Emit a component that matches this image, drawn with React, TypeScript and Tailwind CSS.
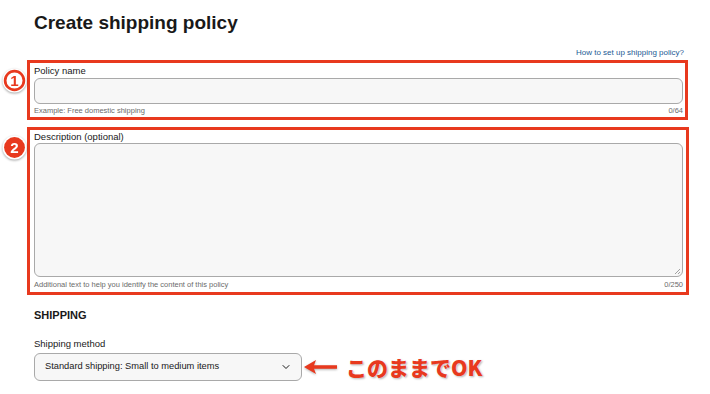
import { ChevronDown } from 'lucide-react'

const RED = '#e8391e'

function Badge({ n, filled }: { n: string; filled?: boolean }) {
  return (
    <svg width="25" height="25" viewBox="0 0 24 24" className="absolute -left-[28px] top-[5px] drop-shadow-[0_1px_1px_rgba(0,0,0,0.35)]">
      <circle cx="12" cy="12" r="11.5" fill="#fff" />
      {filled ? (
        <circle cx="12" cy="12" r="10" fill={RED} />
      ) : (
        <circle cx="12" cy="12" r="9" fill="#fff" stroke={RED} strokeWidth="2.6" />
      )}
      <text
        x="12"
        y="17.2"
        textAnchor="middle"
        fontSize="14.5"
        fontWeight="700"
        fontFamily="Arial, 'Liberation Sans', sans-serif"
        fill={filled ? '#fff' : RED}
      >
        {n}
      </text>
    </svg>
  )
}

export default function App() {
  return (
    <div className="w-[710px] h-[394px] overflow-hidden bg-white font-['Liberation_Sans',Arial,sans-serif] text-[#191919]">
      <div className="pl-[34px] pr-[22px] pt-[10px]">
        <h1 className="text-[19px] leading-[26px] font-bold">Create shipping policy</h1>

        <div className="flex justify-end pr-[4px] mt-[12px]">
          <a className="text-[8px] leading-[10px] text-[#1d5a94]">How to set up shipping policy?</a>
        </div>

        {/* policy name */}
        <div className="relative -ml-[7px] mt-[2px] border-[3px] border-[#e8391e] pl-[4px] pr-[2px] pt-[2px] pb-[1px]">
          <Badge n="1" />
          <div className="text-[9.5px] leading-[12px]">Policy name</div>
          <div className="mt-[1px] h-[26px] rounded-[6px] border border-[#a9a9a9] bg-[#f7f7f7]" />
          <div className="flex justify-between text-[7.5px] leading-[10px] text-[#6b6b6b] mt-[2px]">
            <span>Example: Free domestic shipping</span>
            <span>0/64</span>
          </div>
        </div>

        {/* description */}
        <div className="relative -ml-[7px] mr-[-1px] mt-[7px] border-[3px] border-[#e8391e] pl-[4px] pr-[3px] pt-[1px] pb-[2px]">
          <Badge n="2" filled />
          <div className="text-[9.5px] leading-[12px]">Description (optional)</div>
          <div className="relative h-[134px] rounded-[6px] border border-[#a9a9a9] bg-[#f7f7f7]">
            <svg width="7" height="7" viewBox="0 0 7 7" className="absolute right-[1px] bottom-[1px]">
              <path d="M6 1 L1 6 M6 4 L4 6" stroke="#8a8a8a" strokeWidth="0.8" />
            </svg>
          </div>
          <div className="flex justify-between text-[7.5px] leading-[10px] text-[#6b6b6b] mt-[3px]">
            <span>Additional text to help you identify the content of this policy</span>
            <span>0/250</span>
          </div>
        </div>

        <h2 className="mt-[13px] text-[11px] leading-[14px] font-bold">SHIPPING</h2>
        <div className="mt-[16px] text-[9.5px] leading-[12px]">Shipping method</div>

        <div className="mt-[3px] flex items-center">
          <div className="flex h-[28px] w-[268px] items-center justify-between rounded-[6px] border border-[#a9a9a9] bg-[#f7f7f7] pl-[10px] pr-[9px]">
            <span className="text-[9.3px]">Standard shipping: Small to medium items</span>
            <ChevronDown size={12} strokeWidth={2} />
          </div>
          <svg width="36" height="18" viewBox="0 0 36 18" className="ml-[1px] drop-shadow-[0_1px_1px_rgba(0,0,0,0.3)]">
            <path d="M1 9 L13 2 L11 7.2 L34 7.2 L34 10.8 L11 10.8 L13 16 Z" fill={RED} />
          </svg>
          <span className="ml-[7px] text-[21px] leading-[24px] font-black text-[#e8391e] font-['Noto_Sans_CJK_JP',sans-serif] [text-shadow:0_0_2px_#fff,1px_1px_2px_rgba(0,0,0,0.35)]">
            このままでOK
          </span>
        </div>
      </div>
    </div>
  )
}
